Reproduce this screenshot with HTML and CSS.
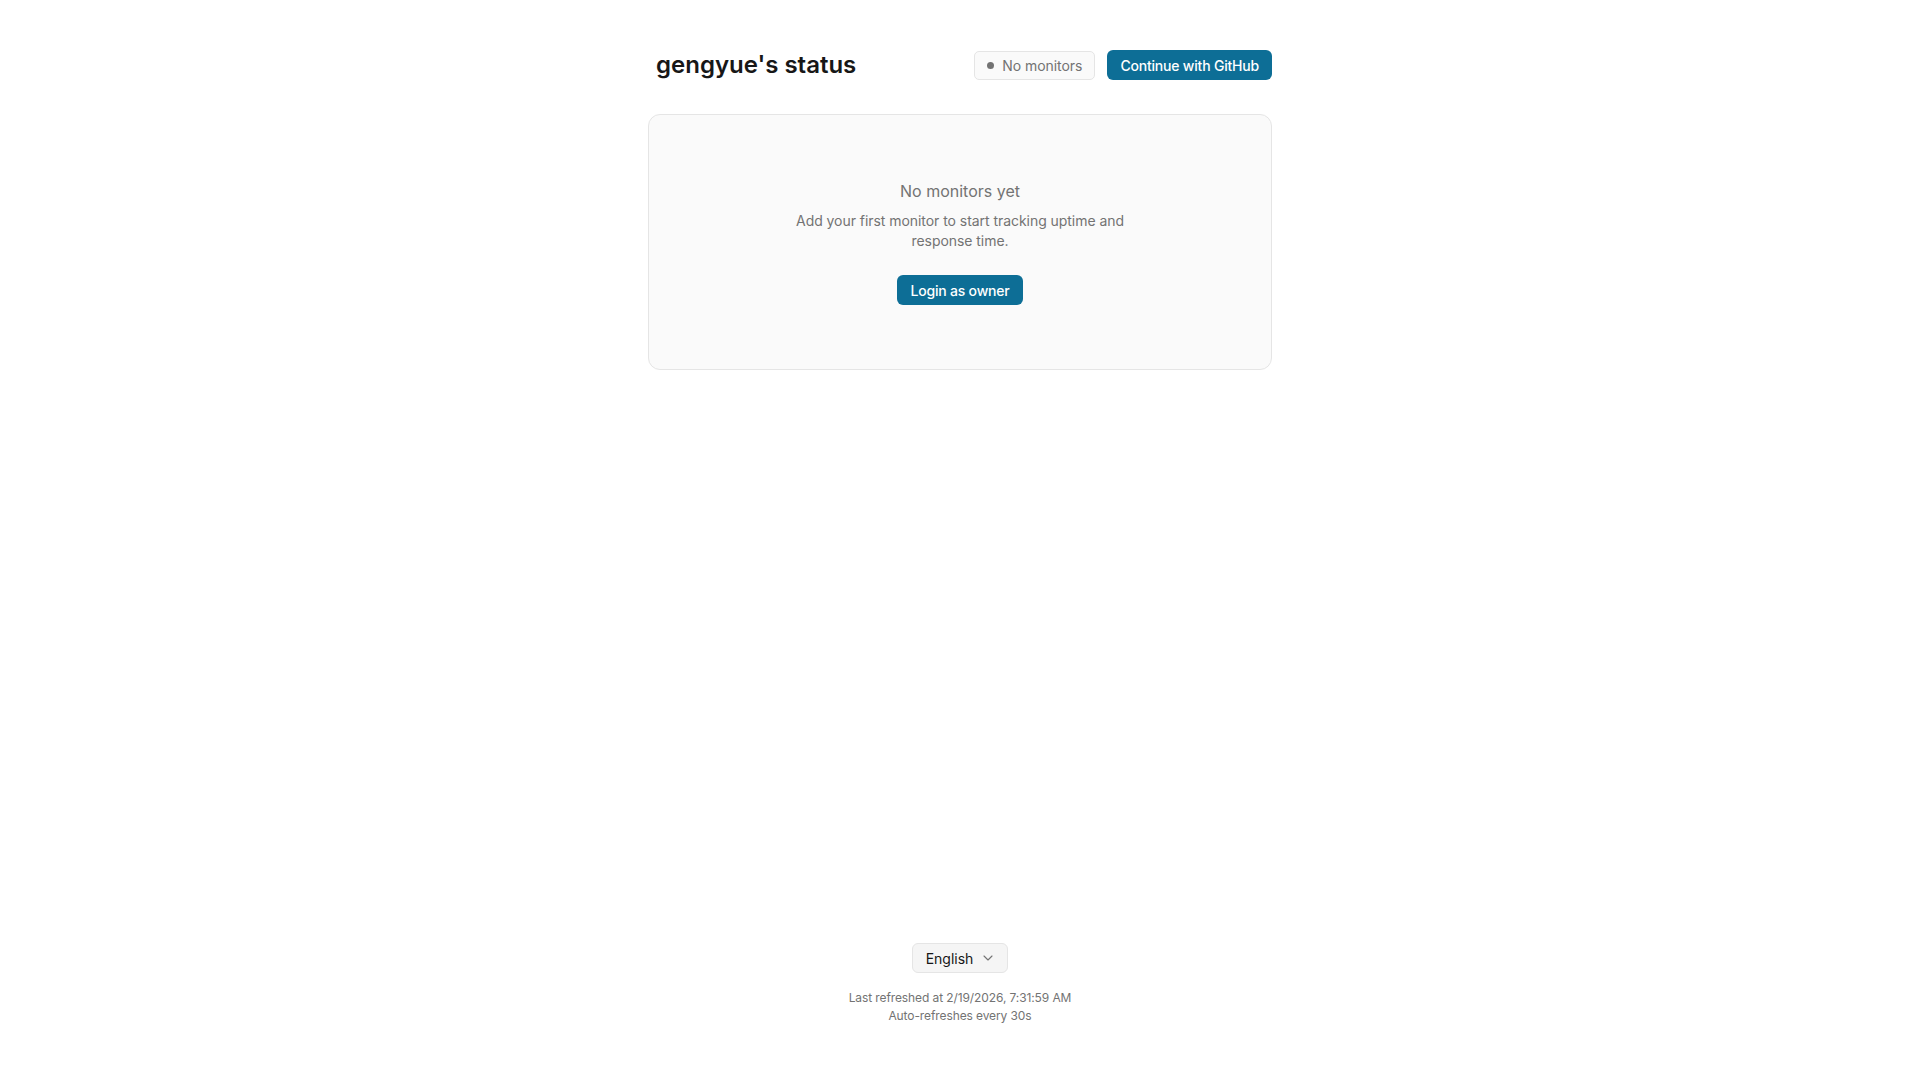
FILE: index.html
```html
<!DOCTYPE html>
<html lang="en">

<head>
    <meta charset="UTF-8">
    <meta name="viewport" content="width=device-width, initial-scale=1.0">
    <title>gengyue's status</title>
    <link rel="stylesheet" href="styles.css">
</head>

<body>

    <main class="page">
        <header class="header">
            <h1 class="title">gengyue's status</h1>
            <div class="actions">
                <span class="badge"><span class="dot"></span>No monitors</span>
                <button class="btn">Continue with GitHub</button>
            </div>
        </header>

        <section class="card">
            <h2 class="empty-title">No monitors yet</h2>
            <p class="empty-text">Add your first monitor to start tracking uptime and response time.</p>
            <button class="btn">Login as owner</button>
        </section>
    </main>

    <footer class="footer">
        <button class="lang">
            English
            <svg width="10" height="6" viewBox="0 0 10 6" fill="none">
                <path d="M1 1l4 4 4-4" stroke="#737373" stroke-width="1.1" stroke-linecap="round" stroke-linejoin="round" />
            </svg>
        </button>
        <div class="meta">
            <div>Last refreshed at 2/19/2026, 7:31:59 AM</div>
            <div>Auto-refreshes every 30s</div>
        </div>
    </footer>

</body>

</html>
```

FILE: styles.css
```css
* {
    box-sizing: border-box;
}

html,
body {
    margin: 0;
    padding: 0;
}

body {
    min-height: 100vh;
    display: flex;
    flex-direction: column;
    font-family: Inter, "Noto Sans", sans-serif;
    color: #171717;
    background: #ffffff;
}

.page {
    flex: 1;
    width: 100%;
    max-width: 672px;
    margin: 0 auto;
    padding: 48px 24px 0;
}

.header {
    display: flex;
    align-items: center;
    justify-content: space-between;
    height: 34px;
    margin-bottom: 32px;
}

.title {
    margin: 0;
    padding-left: 8px;
    font-size: 24px;
    line-height: 32px;
    font-weight: 600;
    color: #171717;
}

.actions {
    display: flex;
    align-items: center;
    gap: 12px;
}

.badge {
    display: inline-flex;
    align-items: center;
    gap: 8px;
    height: 29px;
    padding: 0 12px;
    border: 1px solid #e5e5e5;
    border-radius: 5px;
    background: #fafafa;
    font-size: 14px;
    letter-spacing: -0.05px;
    color: #737373;
}

.dot {
    width: 7px;
    height: 7px;
    border-radius: 50%;
    background: #737373;
}

.btn {
    height: 30px;
    padding: 0 13px;
    border: 0;
    border-radius: 6px;
    background: #0d6e96;
    color: #ffffff;
    font-family: inherit;
    font-size: 14px;
    font-weight: 500;
    letter-spacing: -0.2px;
    cursor: pointer;
}

.card {
    display: flex;
    flex-direction: column;
    align-items: center;
    padding: 64px 24px;
    border: 1px solid #e5e5e5;
    border-radius: 12px;
    background: #fafafa;
    text-align: center;
}

.empty-title {
    margin: 0;
    font-size: 16px;
    line-height: 24px;
    font-weight: 400;
    color: #737373;
}

.empty-text {
    max-width: 384px;
    margin: 8px 0 24px;
    font-size: 14px;
    line-height: 20px;
    letter-spacing: -0.05px;
    color: #737373;
}

.footer {
    display: flex;
    flex-direction: column;
    align-items: center;
    padding-bottom: 55px;
}

.lang {
    display: inline-flex;
    align-items: center;
    gap: 10px;
    height: 30px;
    padding: 0 14px 0 13px;
    border: 1px solid #e5e5e5;
    border-radius: 6px;
    background: #f5f5f5;
    font-family: inherit;
    font-size: 14px;
    color: #171717;
    cursor: pointer;
}

.meta {
    margin-top: 16px;
    font-size: 12px;
    line-height: 18px;
    letter-spacing: -0.1px;
    color: #737373;
    text-align: center;
}
```
